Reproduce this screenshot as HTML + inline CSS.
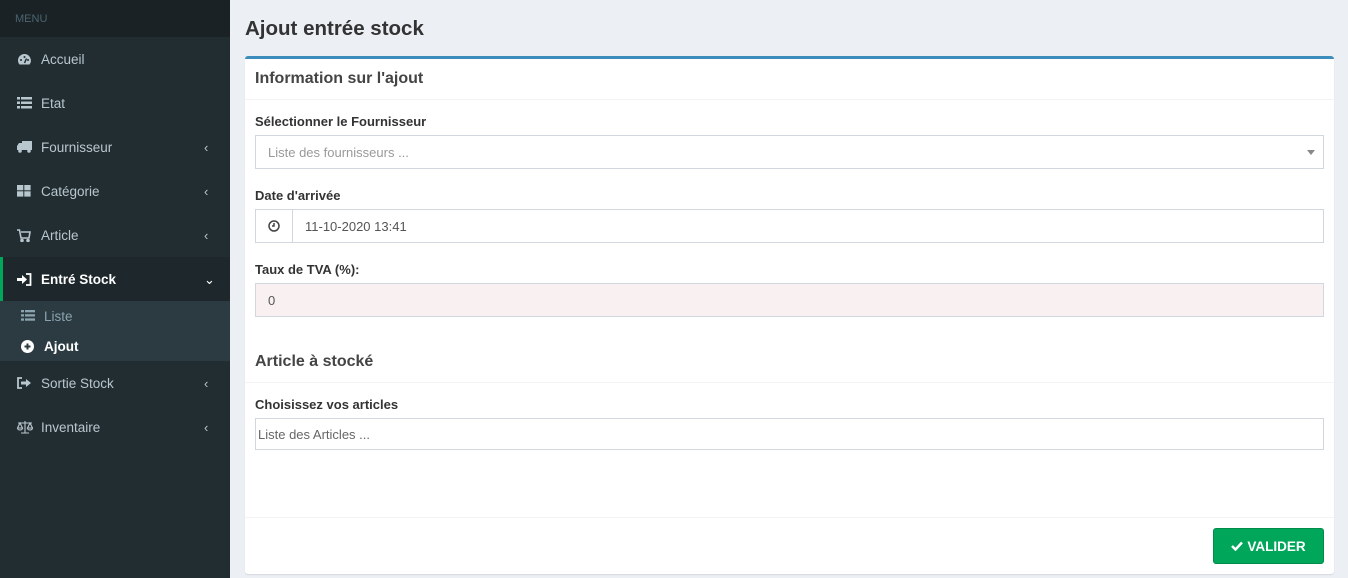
<!DOCTYPE html>
<html><head><meta charset="utf-8"><style>
*{box-sizing:border-box;margin:0;padding:0}
body{width:1348px;height:578px;overflow:hidden;background:#ecf0f5;font-family:"Liberation Sans",sans-serif;position:relative}
.sb{position:absolute;left:0;top:0;width:230px;height:578px;background:#222d32}
.hdr{height:37px;background:#1a2226;color:#4b646f;font-size:11px;padding:13px 15px 0}
.it{position:absolute;left:0;width:230px;height:44px;color:#b8c7ce;font-size:13.5px;line-height:46px;padding-left:41px}
.it svg{position:absolute;left:17px;top:16px}
.it .ch{position:absolute;left:204px;top:0;font-size:13px}
.act{background:#1e282c;color:#fff;border-left:3px solid #00a65a;padding-left:38px;font-weight:bold}
.act svg{left:14px}
.sub{position:absolute;top:301px;left:0;width:230px;height:60px;background:#2c3b41}
.si{position:absolute;left:44px;font-size:13.5px;color:#8aa4af}
.abs{position:absolute}
h1{position:absolute;left:245px;top:17px;font-size:20.5px;font-weight:bold;color:#333}
.box{position:absolute;left:245px;top:56px;width:1089px;height:518px;background:#fff;border-top:3px solid #3c8dbc;border-radius:3px;box-shadow:0 1px 1px rgba(0,0,0,.1)}
.bt{position:absolute;left:10px;font-size:16px;font-weight:bold;color:#444}
.line{position:absolute;left:0;width:1089px;height:1px;background:#f4f4f4}
.lb{position:absolute;left:10px;font-size:13px;font-weight:bold;color:#333}
.inp{position:absolute;left:10px;width:1069px;height:34px;border:1px solid #d2d6de;font-size:13px;color:#555;padding-left:12px;line-height:34px}
.btn{position:absolute;left:968px;top:469px;width:111px;height:36px;background:#00a65a;border:1px solid #008d4c;border-radius:3px;color:#fff;font-size:13.5px;font-weight:bold;line-height:36px;text-align:center}
</style></head><body>
<div class="sb">
<div class="hdr">MENU</div>
<div class="it" style="top:37px"><svg width="15" height="13" viewBox="0 0 15 13"><path d="M7.5 1A6.5 6.5 0 0 0 1 7.5c0 1.6.6 3 1.5 4h10A6.5 6.5 0 0 0 7.5 1z" fill="#b8c7ce"/><circle cx="4" cy="7" r="1" fill="#222d32"/><circle cx="11" cy="7" r="1" fill="#222d32"/><circle cx="7.5" cy="4" r="1" fill="#222d32"/><path d="M7.5 10L9.5 5.5" stroke="#222d32" stroke-width="1.5"/></svg>Accueil</div>
<div class="it" style="top:81px"><svg width="15" height="12" viewBox="0 0 15 12" fill="#b8c7ce"><rect x="0" y="0" width="3" height="2.5"/><rect x="4" y="0" width="11" height="2.5"/><rect x="0" y="4.5" width="3" height="2.5"/><rect x="4" y="4.5" width="11" height="2.5"/><rect x="0" y="9" width="3" height="2.5"/><rect x="4" y="9" width="11" height="2.5"/></svg>Etat</div>
<div class="it" style="top:125px"><svg width="15" height="12" viewBox="0 0 15 12" fill="#b8c7ce"><rect x="5" y="0" width="10" height="9"/><path d="M0 5l2-3h3v7H0z"/><circle cx="3" cy="10" r="1.8"/><circle cx="12" cy="10" r="1.8"/></svg>Fournisseur<span class="ch">&lsaquo;</span></div>
<div class="it" style="top:169px"><svg width="14" height="12" viewBox="0 0 14 12" fill="#b8c7ce"><rect x="0" y="0" width="6.3" height="5.3"/><rect x="7.3" y="0" width="6.3" height="5.3"/><rect x="0" y="6.3" width="6.3" height="5.3"/><rect x="7.3" y="6.3" width="6.3" height="5.3"/></svg>Catégorie<span class="ch">&lsaquo;</span></div>
<div class="it" style="top:213px"><svg width="14" height="13" viewBox="0 0 14 13" fill="none" stroke="#b8c7ce" stroke-width="1.6"><path d="M0 1h2.5l1.5 8h8l1-6H4"/><circle cx="5" cy="11.5" r="1" fill="#b8c7ce"/><circle cx="11" cy="11.5" r="1" fill="#b8c7ce"/></svg>Article<span class="ch">&lsaquo;</span></div>
<div class="it act" style="top:257px"><svg width="15" height="13" viewBox="0 0 15 13" fill="#fff"><path d="M0 5h5V2l5 4.5-5 4.5V8H0z"/><path d="M9 1h4.5v11H9" fill="none" stroke="#fff" stroke-width="1.8"/></svg>Entré Stock<span class="ch" style="left:201px;font-weight:normal">&#8964;</span></div>
<div class="sub">
<svg class="abs" style="left:21px;top:9px" width="14" height="11" viewBox="0 0 14 11" fill="#8aa4af"><rect x="0" y="0" width="3" height="2.3"/><rect x="4" y="0" width="10" height="2.3"/><rect x="0" y="4.2" width="3" height="2.3"/><rect x="4" y="4.2" width="10" height="2.3"/><rect x="0" y="8.4" width="3" height="2.3"/><rect x="4" y="8.4" width="10" height="2.3"/></svg>
<div class="si" style="top:8px">Liste</div>
<svg class="abs" style="left:21px;top:39px" width="13" height="13" viewBox="0 0 13 13"><circle cx="6.5" cy="6.5" r="6.5" fill="#fff"/><path d="M6.5 3.5v6M3.5 6.5h6" stroke="#2c3b41" stroke-width="2"/></svg>
<div class="si" style="top:38px;color:#fff;font-weight:bold">Ajout</div>
</div>
<div class="it" style="top:361px"><svg width="14" height="12" viewBox="0 0 14 12"><path d="M5 1H1v10h4" fill="none" stroke="#b8c7ce" stroke-width="1.8"/><path d="M4 4.5h5V2l5 4-5 4V7.5H4z" fill="#b8c7ce"/></svg>Sortie Stock<span class="ch">&lsaquo;</span></div>
<div class="it" style="top:405px"><svg width="16" height="13" viewBox="0 0 16 13" fill="none" stroke="#b8c7ce" stroke-width="1.1"><path d="M8 0v12M4 12h8M1 2h14M3 2l-2.5 5h5zM13 2l-2.5 5h5z"/><path d="M0.5 7a2.5 2 0 0 0 5 0M10.5 7a2.5 2 0 0 0 5 0"/></svg>Inventaire<span class="ch">&lsaquo;</span></div>
</div>
<h1>Ajout entrée stock</h1>
<div class="box">
<div class="bt" style="top:11px">Information sur l'ajout</div>
<div class="line" style="top:40px"></div>
<div class="lb" style="top:55px">Sélectionner le Fournisseur</div>
<div class="inp" style="top:76px;color:#999">Liste des fournisseurs ...<span class="abs" style="right:8px;top:14px;width:0;height:0;border-left:4px solid transparent;border-right:4px solid transparent;border-top:5px solid #888"></span></div>
<div class="lb" style="top:129px">Date d'arrivée</div>
<div class="inp" style="top:150px;padding-left:0"><span class="abs" style="left:0;top:0;width:37px;height:32px;border-right:1px solid #d2d6de"><svg class="abs" style="left:12px;top:10px" width="12" height="12" viewBox="0 0 12 12" fill="none" stroke="#444" stroke-width="1.5"><circle cx="6" cy="6" r="5"/><path d="M6 3v3H4"/></svg></span><span style="padding-left:49px">11-10-2020 13:41</span></div>
<div class="lb" style="top:203px">Taux de TVA (%):</div>
<div class="inp" style="top:224px;background:#f9f1f1">0</div>
<div class="bt" style="top:294px">Article à stocké</div>
<div class="line" style="top:323px"></div>
<div class="lb" style="top:338px">Choisissez vos articles</div>
<div class="inp" style="top:359px;height:32px;padding-left:2px;line-height:32px;color:#666">Liste des Articles ...</div>
<div class="line" style="top:458px"></div>
<div class="btn"><svg width="12" height="10" viewBox="0 0 12 10" style="margin-right:4px"><path d="M1 5l3.5 3.5L11 1.5" fill="none" stroke="#fff" stroke-width="2.5"/></svg>VALIDER</div>
</div>
</body></html>
